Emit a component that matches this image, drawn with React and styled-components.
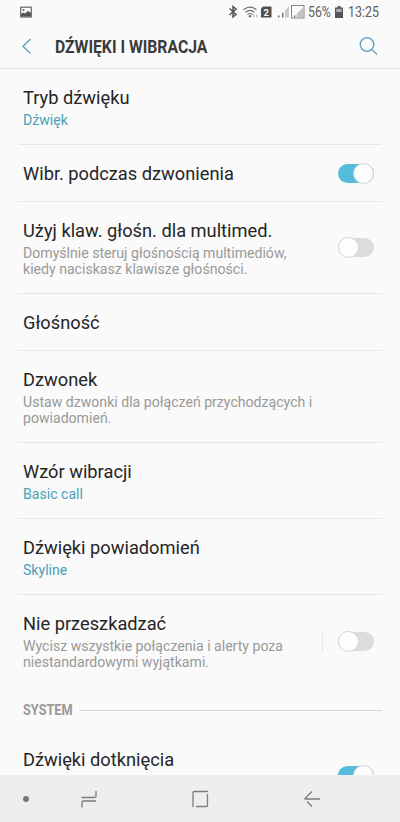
import React from 'react';
import styled, { createGlobalStyle } from 'styled-components';

const GlobalStyle = createGlobalStyle`
  * {
    box-sizing: border-box;
  }

  body {
    margin: 0;
    background-color: #fafafa;
    font-family: Roboto, sans-serif;
  }
`;

const Screen = styled.div`
  width: 400px;
  height: 822px;
  overflow: hidden;

  display: flex;
  flex-direction: column;

  background-color: #fafafa;
`;

const StatusBar = styled.div`
  flex: none;
  height: 24px;
  padding: 0 21px 0 20px;

  display: flex;
  justify-content: space-between;
  align-items: center;
`;

const StatusIcons = styled.div`
  display: flex;
  align-items: center;
`;

const StatusText = styled.span`
  width: ${(props) => props.$width}px;
  margin-left: ${(props) => props.$gap}px;

  font-size: 14px;
  line-height: 26px;
  color: #606060;
  white-space: nowrap;

  span {
    display: inline-block;
    transform: scaleX(${(props) => props.$scale});
    transform-origin: left;
  }
`;

const Header = styled.header`
  flex: none;
  height: 45px;
  padding: 0 21px 0 20px;

  display: flex;
  align-items: center;

  border-bottom: 1px solid #e6e6e6;
`;

const HeaderTitle = styled.h1`
  flex: 1;
  margin: 1px 0 0 20.5px;

  font-size: 17.5px;
  font-weight: 700;
  line-height: 24px;
  color: #3a3a3a;
  white-space: nowrap;

  span {
    display: inline-block;
    transform: scaleX(0.9);
    transform-origin: left;
  }
`;

const List = styled.main`
  flex: 1;
  min-height: 0;
  padding: 0 18px;
  overflow: hidden;
`;

const RowContainer = styled.div`
  min-height: ${(props) => (props.$tall ? 90 : 57)}px;
  padding: 18px 8px 16px 5px;

  display: flex;
  align-items: center;

  border-bottom: 1px solid ${(props) => (props.$divider ? '#e7e7e7' : 'transparent')};
`;

const RowBody = styled.div`
  flex: 1;
  align-self: flex-start;
`;

const RowTitle = styled.div`
  font-size: 18.25px;
  line-height: 22px;
  color: #252525;
  white-space: nowrap;
`;

const RowDescription = styled.div`
  margin-top: 3px;

  font-size: 14.1px;
  line-height: 16px;
  color: ${(props) => (props.$accent ? '#4aa0b8' : '#999999')};
  white-space: pre;
`;

const SwitchDivider = styled.div`
  width: 1px;
  height: 20px;
  margin-right: 15px;
  background-color: #e6e6e6;
`;

const Track = styled.div`
  width: 36px;
  height: 19px;
  margin-bottom: ${(props) => (props.$separated ? 0 : 2)}px;

  display: flex;
  justify-content: ${(props) => (props.$on ? 'flex-end' : 'flex-start')};
  align-items: center;

  background-color: ${(props) => (props.$on ? '#57bbdc' : '#dcdcdc')};
  border-radius: 10px;
`;

const Thumb = styled.div`
  flex: none;
  width: 21px;
  height: 21px;

  background-color: #fdfdfd;
  border: 1px solid #d4d4d4;
  border-radius: 50%;
`;

const SectionHeader = styled.div`
  height: 44px;
  padding: 11px 0 9px 5px;

  display: flex;
  align-items: center;
`;

const SectionTitle = styled.span`
  width: 56px;

  font-size: 14px;
  font-weight: 700;
  line-height: 24px;
  color: #999999;

  span {
    display: inline-block;
    transform: scaleX(0.91);
    transform-origin: left;
  }
`;

const SectionLine = styled.div`
  flex: 1;
  height: 1px;
  background-color: #d8d8d8;
`;

const NavBar = styled.nav`
  flex: none;
  height: 47px;
  padding: 1px 0 0 22px;

  display: grid;
  grid-template-columns: 58px 111px 112px auto;
  align-items: center;

  background-color: #eeeeee;
`;

function Switch({ on, separated }) {
  return (
    <Track $on={on} $separated={separated}>
      <Thumb />
    </Track>
  );
}

function Row({ title, description, accent, toggle, on, separated, tall, divider = true }) {
  return (
    <RowContainer $divider={divider} $tall={tall}>
      <RowBody>
        <RowTitle>{title}</RowTitle>
        {description && <RowDescription $accent={accent}>{description}</RowDescription>}
      </RowBody>
      {separated && <SwitchDivider />}
      {toggle && <Switch on={on} separated={separated} />}
    </RowContainer>
  );
}

function StatusGlyphs() {
  return (
    <svg width="78" height="16" viewBox="0 0 78 16" fill="none">
      <path d="M1.500 4.500L8 10.500L5 13V2.500L8 5L1.500 11" stroke="#555" strokeWidth="1.500" />
      <g stroke="#707070" strokeWidth="1.200">
        <path d="M15.500 5.800Q22 0.500 28.500 5.800" />
        <path d="M17.500 8.300Q22 4.300 26.500 8.300" />
        <path d="M19.500 10.600Q22 8.400 24.500 10.600" />
      </g>
      <circle cx="22" cy="12.300" r="1.200" fill="#707070" />
      <path d="M24.500 12l2-2v4zM30 12l-2-2v4z" fill="#c4c4c4" />
      <path d="M35 2.500h8.500v11H33v-9z" fill="#505050" />
      <text x="38.300" y="11.500" textAnchor="middle" fontSize="9.500" fontWeight="700" fill="#fff">2</text>
      <path d="M61 2.500V13.500H57V6.500z" fill="#c9c9c9" />
      <path d="M50 11.500h1.500v2H50zM54 9.500l1.500-1.500v5.500H54z" fill="#707070" />
      <rect x="63.500" y="1.500" width="12.500" height="12.500" stroke="#858585" />
      <path d="M75 3.500V13H68.500V10z" fill="#c4c4c4" />
      <path d="M66 11.500h1.500V13H66z" fill="#707070" />
    </svg>
  );
}

function App() {
  return (
    <>
      <GlobalStyle />
      <Screen>
        <StatusBar>
          <svg width="12" height="12" viewBox="0 0 12 12">
            <rect x="0.700" y="1.200" width="10.600" height="9.800" fill="none" stroke="#666" strokeWidth="1.200" />
            <path d="M1 10.500V8L3.500 6.500L5 7.500L8 5L11 7V10.500z" fill="#555" />
            <circle cx="3.500" cy="4" r="1" fill="#666" />
          </svg>
          <StatusIcons>
            <StatusGlyphs />
            <StatusText $width={27} $gap={2} $scale={0.88}>
              <span>56%</span>
            </StatusText>
            <svg width="8" height="12" viewBox="0 0 8 12">
              <path d="M2.500 0h3v1.500H8V12H0V1.500h2.500z" fill="#555" />
              <path d="M1.200 2.800h5.600V6H1.200z" fill="#aaa" />
            </svg>
            <StatusText $width={31} $gap={5} $scale={0.89}>
              <span>13:25</span>
            </StatusText>
          </StatusIcons>
        </StatusBar>
        <Header>
          <svg width="14" height="18" viewBox="0 0 14 18" fill="none">
            <path d="M10.500 2L3 9.200L10.500 16.500" stroke="#5aa5b8" strokeWidth="1.400" />
          </svg>
          <HeaderTitle>
            <span>DŹWIĘKI I WIBRACJA</span>
          </HeaderTitle>
          <svg width="20" height="20" viewBox="0 0 20 20" fill="none" stroke="#5b9fb7" strokeWidth="1.300">
            <circle cx="8" cy="8.500" r="6.800" />
            <path d="M13 13.500L18 18.500" />
          </svg>
        </Header>
        <List>
          <Row title="Tryb dźwięku" description="Dźwięk" accent />
          <Row title="Wibr. podczas dzwonienia" toggle on />
          <Row
            title="Użyj klaw. głośn. dla multimed."
            description={'Domyślnie steruj głośnością multimediów,\nkiedy naciskasz klawisze głośności.'}
            toggle
          />
          <Row title="Głośność" />
          <Row
            title="Dzwonek"
            description={'Ustaw dzwonki dla połączeń przychodzących i\npowiadomień.'}
          />
          <Row title="Wzór wibracji" description="Basic call" accent />
          <Row title="Dźwięki powiadomień" description="Skyline" accent />
          <Row
            title="Nie przeszkadzać"
            description={'Wycisz wszystkie połączenia i alerty poza\nniestandardowymi wyjątkami.'}
            toggle
            separated
            divider={false}
          />
          <SectionHeader>
            <SectionTitle>
              <span>SYSTEM</span>
            </SectionTitle>
            <SectionLine />
          </SectionHeader>
          <Row title="Dźwięki dotknięcia" toggle on tall />
        </List>
        <NavBar>
          <svg width="8" height="8" viewBox="0 0 8 8">
            <circle cx="4" cy="4" r="3" fill="#777" />
          </svg>
          <svg width="18" height="18" viewBox="0 0 18 18" fill="none" stroke="#7c7c7c" strokeWidth="1.300">
            <path d="M1.500 7.500H14.500Q16 7.500 16 6V1" />
            <path d="M16 11H3.500Q2 11 2 12.500V17.500" />
          </svg>
          <svg width="18" height="18" viewBox="0 0 18 18" fill="none" stroke="#7c7c7c" strokeWidth="1.300">
            <path d="M2 17V2.500Q2 1.500 3 1.500H17" />
            <path d="M16.500 4V15.500Q16.500 16.500 15.500 16.500H5" />
          </svg>
          <svg width="18" height="18" viewBox="0 0 18 18" fill="none" stroke="#7c7c7c" strokeWidth="1.300">
            <path d="M17 9H2.500Q1.500 9 2.200 8.300L9 1.500M4 11.500L9 16.500" />
          </svg>
        </NavBar>
      </Screen>
    </>
  );
}

export default App;
